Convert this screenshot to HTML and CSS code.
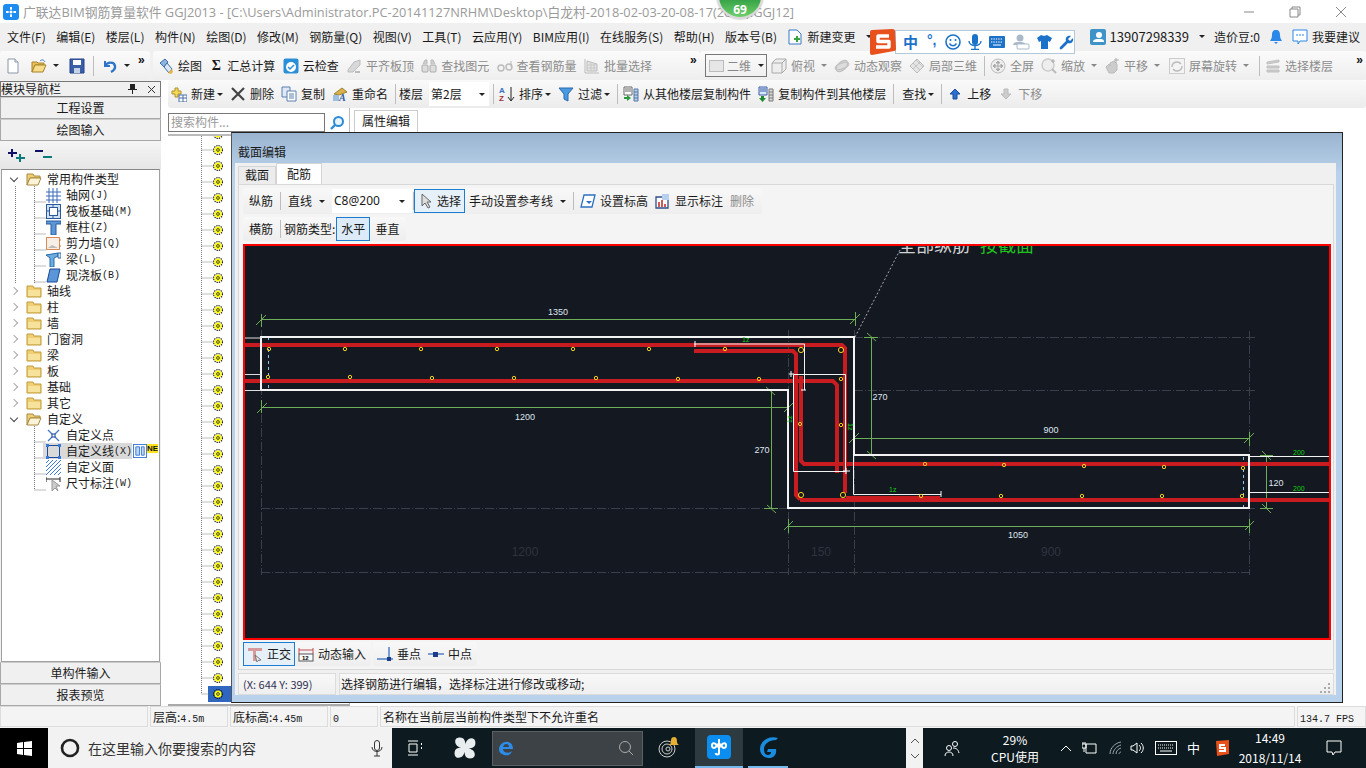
FILE: index.html
```html
<!DOCTYPE html>
<html lang="zh">
<head>
<meta charset="utf-8">
<title>广联达BIM钢筋算量软件</title>
<link rel="stylesheet" href="styles.css">
</head>
<body>
<svg class="defs" width="0" height="0">
  <symbol id="new" viewBox="0 0 16 16"><path d="M3 1h7l3 3v11H3z" fill="#fff" stroke="#8a97a8"/><path d="M10 1v3h3" fill="#dfe6ee" stroke="#8a97a8"/></symbol>
  <symbol id="open" viewBox="0 0 16 16"><path d="M1 14V4h5l1 1h6v2H4z" fill="#e8c05a" stroke="#a8842c"/><path d="M1 14l3-7h11l-3 7z" fill="#f7dc8c" stroke="#a8842c"/><path d="M9 3c2-2 4-1 5 1" fill="none" stroke="#3a78b8"/></symbol>
  <symbol id="save" viewBox="0 0 16 16"><path d="M1 1h14v14H1z" fill="#3a5fa8" stroke="#24408a"/><path d="M4 2h8v5H4z" fill="#fff"/><path d="M5 10h6v5H5z" fill="#c6d2e6"/></symbol>
  <symbol id="undo" viewBox="0 0 16 16"><path d="M3 3v5h5" fill="none" stroke="#2c74c8" stroke-width="2"/><path d="M3 8c2-4 9-5 10 0 .5 3-2 5-4 6" fill="none" stroke="#2c74c8" stroke-width="2.4"/></symbol>
  <symbol id="paint" viewBox="0 0 16 16"><path d="M2 5l5-4 3 3-4 5z" fill="#8fb4de" stroke="#3d6ea8"/><path d="M6 9l3-4 5 6-3 4z" fill="#dbe7f4" stroke="#3d6ea8"/><path d="M10 15l4-4 1 3-2 2z" fill="#e8b33a"/></symbol>
  <symbol id="cloud" viewBox="0 0 16 16"><rect x="0.5" y="0.5" width="15" height="15" rx="2" fill="#2b8fd8"/><circle cx="8" cy="9" r="5" fill="#fff"/><path d="M5 9l2 2 4-4" fill="none" stroke="#2b8fd8" stroke-width="1.5"/></symbol>
  <symbol id="gridgray" viewBox="0 0 16 16"><path d="M2 12l6-8 6-2v5l-7 7H2z" fill="#d8d8d8" stroke="#bbb"/><path d="M9 13h5v2H9z" fill="#bbb"/></symbol>
  <symbol id="bino" viewBox="0 0 16 16"><path d="M2 6l2-4h2v4M14 6l-2-4h-2v4" fill="#ccc" stroke="#bbb"/><rect x="1" y="7" width="6" height="7" rx="1" fill="#ddd" stroke="#aaa"/><rect x="9" y="7" width="6" height="7" rx="1" fill="#ddd" stroke="#aaa"/></symbol>
  <symbol id="glass" viewBox="0 0 16 16"><circle cx="4" cy="10" r="3" fill="none" stroke="#bbb" stroke-width="1.4"/><circle cx="12" cy="9" r="3" fill="none" stroke="#bbb" stroke-width="1.4"/><path d="M14 3v6" stroke="#bbb"/></symbol>
  <symbol id="batch" viewBox="0 0 16 16"><path d="M1 1v14h14" fill="none" stroke="#bbb"/><path d="M3 3l10 3v7H3z" fill="#e4e4e4" stroke="#bbb"/><path d="M3 7h10M3 10h10M7 4v9M10 5v8" stroke="#c8c8c8"/></symbol>
  <symbol id="cube" viewBox="0 0 16 16"><path d="M1 5l4-4h10v10l-4 4H1z" fill="#eee" stroke="#aaa"/><path d="M1 5h10v10M11 5l4-4" fill="none" stroke="#aaa"/></symbol>
  <symbol id="orbit" viewBox="0 0 16 16"><ellipse cx="8" cy="8" rx="4" ry="7" transform="rotate(45 8 8)" fill="#ddd" stroke="#bbb"/><ellipse cx="8" cy="8" rx="7" ry="3" transform="rotate(-20 8 8)" fill="none" stroke="#c4c4c4" stroke-width="1.5"/></symbol>
  <symbol id="local3d" viewBox="0 0 16 16"><path d="M8 1l7 7-7 7-7-7z" fill="#e4e4e4" stroke="#bbb"/><path d="M4 5l7 7M7 2l7 7M4 11l7-7" stroke="#c4c4c4"/></symbol>
  <symbol id="full" viewBox="0 0 16 16"><circle cx="8" cy="8" r="7" fill="#eee" stroke="#bbb"/><path d="M8 3v10M3 8h10M8 3l-2 2h4zM8 13l-2-2h4zM3 8l2-2v4zM13 8l-2-2v4z" fill="#aaa" stroke="#aaa"/></symbol>
  <symbol id="zoomi" viewBox="0 0 16 16"><circle cx="7" cy="7" r="6" fill="#eee" stroke="#ccc" stroke-width="1.5"/><path d="M11 11l4 4" stroke="#bbb" stroke-width="2"/><path d="M12 1v4M10 3h4" stroke="#aaa"/></symbol>
  <symbol id="hand" viewBox="0 0 16 16"><path d="M2 9l3-3 1 2V5l4-2 3 3v6l-3 3H5z" fill="#ccc" stroke="#bbb"/><path d="M12 0v5M10 2h5" stroke="#aaa"/></symbol>
  <symbol id="rot" viewBox="0 0 16 16"><rect x="0.5" y="0.5" width="15" height="15" fill="#f4f4f4" stroke="#ccc"/><path d="M3 9a5 5 0 0 1 9-3M13 8a5 5 0 0 1-9 3" fill="none" stroke="#bbb" stroke-width="1.4"/></symbol>
  <symbol id="layers" viewBox="0 0 16 16"><path d="M2 4l12-2v2L2 6zM2 8h12v2H2zM2 12h12v2H2z" fill="#ccc" stroke="#c0c0c0"/></symbol>
  <symbol id="add" viewBox="0 0 16 16"><path d="M1 5h3V2h3v3h3v3H7v3H4V8H1z" fill="#f4d858" stroke="#b0902a"/><rect x="8" y="9" width="8" height="7" fill="#fff" stroke="#4870a8"/><path d="M8 12h8M12 9v7" stroke="#4870a8"/></symbol>
  <symbol id="del" viewBox="0 0 16 16"><path d="M2 2l12 12M14 2L2 14" stroke="#444" stroke-width="2.2"/></symbol>
  <symbol id="copy" viewBox="0 0 16 16"><path d="M1 1h8v10H1z" fill="#dfe9f6" stroke="#5a80b0"/><path d="M6 5h9v10H6z" fill="#fff" stroke="#5a80b0"/><path d="M8 8h5M8 10h5M8 12h5" stroke="#5a80b0"/></symbol>
  <symbol id="rename" viewBox="0 0 16 16"><path d="M2 8l8-6 5 4-8 3z" fill="#d8b24a" stroke="#a08030"/><path d="M1 15V9h6v6z" fill="#9cc0e0"/><text x="7" y="15" font-size="10" font-family="Liberation Serif" font-weight="700" font-style="italic" fill="#2c5ca8">A</text></symbol>
  <symbol id="sort" viewBox="0 0 16 16"><text x="0" y="7" font-size="8" font-family="Liberation Sans" font-weight="700" fill="#3272c0">A</text><text x="0" y="15" font-size="8" font-family="Liberation Sans" font-weight="700" fill="#a03030">Z</text><path d="M12 1v13M9 11l3 4 3-4" fill="none" stroke="#222"/></symbol>
  <symbol id="funnel" viewBox="0 0 16 16"><path d="M1 2h14l-5 6v7l-4-2V8z" fill="#4a9ae0" stroke="#2868b0"/></symbol>
  <symbol id="copyin" viewBox="0 0 16 16"><path d="M1 1h8v8H1z" fill="#fff" stroke="#666"/><path d="M2 3h6M2 5h6" stroke="#666"/><path d="M11 3h4v12h-4z" fill="#bcd0e8" stroke="#5078a8"/><path d="M11 6h4M11 9h4M11 12h4" stroke="#5078a8"/><path d="M1 11h3V9l4 3-4 3v-2H1z" fill="#2a9a40"/></symbol>
  <symbol id="copyout" viewBox="0 0 16 16"><path d="M1 1h8v8H1z" fill="#d8e6fa" stroke="#3a5ca8"/><path d="M2 3h6M2 5h6" stroke="#3a5ca8"/><path d="M11 3h4v12h-4z" fill="#ddd" stroke="#777"/><path d="M11 6h4M11 9h4M11 12h4" stroke="#777"/><path d="M3 10h3v2h2l-3.500 4L1 12h2z" fill="#1e8a30"/></symbol>
  <symbol id="up" viewBox="0 0 16 16"><path d="M8 3l5 5h-3v5H6V8H3z" fill="#2a70d0" stroke="#1a4c98"/></symbol>
  <symbol id="down" viewBox="0 0 16 16"><path d="M6 3h4v5h3l-5 5-5-5h3z" fill="#ccc" stroke="#bbb"/></symbol>
  <symbol id="cursor" viewBox="0 0 16 16"><path d="M3 1v12l3-3 3 5 2-1-3-5h4z" fill="#ddd" stroke="#666"/></symbol>
  <symbol id="level" viewBox="0 0 16 16"><path d="M4 2h11l-3 12H1z" fill="#fff" stroke="#2c70c0" stroke-width="1.3"/><path d="M6 8h6l-3 3z" fill="#2c70c0"/></symbol>
  <symbol id="mark" viewBox="0 0 16 16"><path d="M1 4h12v11H1z" fill="#fff" stroke="#2c4e88" stroke-width="1.3"/><path d="M7 1h7v6H7z" fill="#b8d0ee"/><path d="M4 9v5M7 7v7M10 11v3" stroke="#c83030" stroke-width="1.6"/></symbol>
  <symbol id="ortho" viewBox="0 0 16 16"><path d="M1 2h14v3H9v10H6V5H1z" fill="#d89a9a"/><path d="M8 9l6 5-3 .5-1 1.500z" fill="#f0f0f0" stroke="#777"/></symbol>
  <symbol id="dyn" viewBox="0 0 16 16"><path d="M1 2v6M15 2v6M1 4h14" fill="none" stroke="#c05050"/><rect x="1" y="8" width="14" height="7" fill="#fff" stroke="#555"/><text x="4" y="14" font-size="6" font-family="Liberation Sans" font-weight="700">12</text></symbol>
  <symbol id="perp" viewBox="0 0 16 16"><path d="M0 13h16" stroke="#4478c0" stroke-width="1.4"/><path d="M12 1v14" stroke="#4478c0" stroke-width="1.4"/><rect x="10" y="11" width="4" height="4" fill="#1a3c8a"/></symbol>
  <symbol id="mid" viewBox="0 0 16 16"><path d="M0 8h16" stroke="#4478c0" stroke-width="1.4"/><rect x="5" y="6" width="5" height="5" fill="#1a3c8a"/></symbol>
  <symbol id="closed" viewBox="0 0 16 14"><path d="M1 13V2h6l1 2h7v9z" fill="#f0cf72" stroke="#c09a3c"/><path d="M2 6h12v6H2z" fill="#f7e29c"/></symbol>
  <symbol id="opened" viewBox="0 0 16 14"><path d="M1 13V2h6l1 2h6v2H4z" fill="#f0cf72" stroke="#a88a40"/><path d="M1 13l3-7h11l-3 7z" fill="#fbf3d8" stroke="#a88a40"/></symbol>
  <symbol id="gear" viewBox="0 0 10 10"><circle cx="5" cy="5" r="4.400" fill="none" stroke="#111" stroke-width="1.2" stroke-dasharray="1.300 1"/><circle cx="5" cy="5" r="3.500" fill="#ff0"/><circle cx="5" cy="5" r="1.400" fill="#ff0" stroke="#333" stroke-width="0.900"/></symbol>
  <symbol id="axis" viewBox="0 0 15 15"><path d="M0 4h15M0 8h15M0 12h15M3 0v15M7 0v15M11 0v15" stroke="#3a6ab8"/></symbol>
  <symbol id="raft" viewBox="0 0 15 15"><rect x="0.5" y="0.5" width="14" height="14" fill="#cfe0f2" stroke="#2a5a9c"/><rect x="3.5" y="3.5" width="8" height="8" fill="#fff" stroke="#2a5a9c"/><path d="M0 7h3M12 7h3M7 0v3M7 12v3" stroke="#2a5a9c"/></symbol>
  <symbol id="col" viewBox="0 0 15 15"><path d="M0 1h15v3H10v11H5V4H0z" fill="#5a96d8" stroke="#2a5a9c"/></symbol>
  <symbol id="wall" viewBox="0 0 15 15"><rect x="0.5" y="1.5" width="13" height="12" fill="#f7eee6" stroke="#d88a5a"/><path d="M2 12l4-3 6 3z" fill="#bbb"/><path d="M13 4h2M13 10h2" stroke="#d8782a"/></symbol>
  <symbol id="beam" viewBox="0 0 15 15"><path d="M0 3l12-2v3L8 6v9H4V6z" fill="#6aaee0" stroke="#2a6aa8"/><path d="M12 1h3v5h-3z" fill="#cfe0f2" stroke="#2a6aa8"/></symbol>
  <symbol id="slab" viewBox="0 0 15 15"><path d="M4 1h10l-3 13H1z" fill="#5a96d8" stroke="#1a4a98"/></symbol>
  <symbol id="point" viewBox="0 0 15 15"><path d="M2 2l11 11M13 2L2 13" stroke="#4478c0" stroke-width="1.3"/><rect x="6" y="6" width="3" height="3" fill="#fff" stroke="#1a4a98"/></symbol>
  <symbol id="line" viewBox="0 0 15 15"><rect x="1.5" y="1.5" width="12" height="12" fill="none" stroke="#1a4a98"/><path d="M0 0h3v3H0zM12 0h3v3h-3zM0 12h3v3H0zM12 12h3v3h-3z" fill="#3a7ad8"/></symbol>
  <symbol id="area" viewBox="0 0 15 15"><path d="M0 3l3-3M0 7l7-7M0 11L11 0M0 15L15 0M4 15L15 4M8 15l7-7M12 15l3-3" stroke="#3a7ad8"/></symbol>
  <symbol id="dim" viewBox="0 0 15 15"><path d="M0 1v5M14 1v5M0 3h14" fill="none" stroke="#222"/><path d="M6 4v11l3-3 3 3-2-5h4z" fill="#ccc" stroke="#999"/></symbol>
  <symbol id="plus2" viewBox="0 0 20 14"><path d="M1 5h9M5 1v8" stroke="#116" stroke-width="2"/><path d="M9 10h9M13 6v8" stroke="#0a7a7a" stroke-width="2"/></symbol>
  <symbol id="minus2" viewBox="0 0 20 14"><path d="M1 3h8" stroke="#116" stroke-width="2"/><path d="M9 9h9" stroke="#0a7a7a" stroke-width="2"/></symbol>
  <symbol id="user" viewBox="0 0 16 16"><rect width="16" height="16" rx="2" fill="#3e94c8"/><circle cx="9" cy="6" r="3" fill="#fff"/><path d="M3 13c0-3 3-3 6-3s5 0 5 3z" fill="#fff"/></symbol>
</svg>

<div class="app">
  <header class="titlebar">
    <svg class="appicon" width="16" height="16" viewBox="0 0 16 16"><rect width="16" height="16" rx="3" fill="#1c8cf0"/><path d="M8 3v10M3 8h10" stroke="#fff" stroke-width="2"/><circle cx="8" cy="8" r="2" fill="none" stroke="#1c8cf0"/></svg>
    <span class="titletext">广联达BIM钢筋算量软件 GGJ2013 - [C:\Users\Administrator.PC-20141127NRHM\Desktop\白龙村-2018-02-03-20-08-17(2666).GGJ12]</span>
    <div class="winctrls">
      <svg width="12" height="12" viewBox="0 0 12 12"><path d="M1 6h10" stroke="#888"/></svg>
      <svg width="12" height="12" viewBox="0 0 12 12"><path d="M3 3V1h8v8H9M1 3h8v8H1z" fill="none" stroke="#888"/></svg>
      <svg width="12" height="12" viewBox="0 0 12 12"><path d="M1 1l10 10M11 1L1 11" stroke="#888"/></svg>
    </div>
  </header>

  <nav class="menubar">
    <span>文件(F)</span><span>编辑(E)</span><span>楼层(L)</span><span>构件(N)</span><span>绘图(D)</span><span>修改(M)</span><span>钢筋量(Q)</span><span>视图(V)</span><span>工具(T)</span><span>云应用(Y)</span><span>BIM应用(I)</span><span>在线服务(S)</span><span>帮助(H)</span><span>版本号(B)</span>
    <span class="menu-change"><svg class="ic" viewBox="0 0 16 16"><path d="M2 1h8l4 4v10H2z" fill="#fff" stroke="#3a78c8"/><path d="M7 9h2V7h2v2h2v2h-2v2H9v-2H7z" fill="#3aa040"/></svg>新建变更<i class="caret"></i></span>
    <div class="menu-right">
      <span class="account"><svg class="ic" viewBox="0 0 16 16"><use href="#user"/></svg><span class="phone">13907298339</span><i class="caret"></i></span>
      <span>造价豆:0</span>
      <svg class="bell" viewBox="0 0 14 16"><path d="M7 1c3 0 4 2 4 5 0 3 1 4 2 6H1c1-2 2-3 2-6 0-3 1-5 4-5zM5 13h4l-2 2z" fill="#2c88e8"/></svg>
      <span class="suggest"><svg class="ic" viewBox="0 0 16 16"><path d="M1 1h14v11H8l-2 3v-3H1z" fill="#fff" stroke="#2c88e8"/><path d="M4 6h2M7 6h2M10 6h2" stroke="#2c88e8"/></svg>我要建议</span>
    </div>
  </nav>

  <div class="toolbar1">
    <div class="tbgroup g1">
      <svg class="ic" viewBox="0 0 16 16"><use href="#new"/></svg>
      <svg class="ic s6" viewBox="0 0 16 16"><use href="#open"/></svg><i class="caret"></i>
      <svg class="ic s2" viewBox="0 0 16 16"><use href="#save"/></svg>
      <i class="sep"></i>
      <svg class="ic" viewBox="0 0 16 16"><use href="#undo"/></svg><i class="caret"></i>
      <span class="more m1">»</span>
    </div>
    <div class="tbgroup g2">
      <span class="tb"><svg class="ic" viewBox="0 0 16 16"><use href="#paint"/></svg>绘图</span>
      <span class="tb sigma"><b>Σ</b>汇总计算</span>
      <span class="tb"><svg class="ic" viewBox="0 0 16 16"><use href="#cloud"/></svg>云检查</span>
      <span class="tb dis"><svg class="ic" viewBox="0 0 16 16"><use href="#gridgray"/></svg>平齐板顶</span>
      <span class="tb dis"><svg class="ic" viewBox="0 0 16 16"><use href="#bino"/></svg>查找图元</span>
      <span class="tb dis"><svg class="ic" viewBox="0 0 16 16"><use href="#glass"/></svg>查看钢筋量</span>
      <span class="tb dis"><svg class="ic" viewBox="0 0 16 16"><use href="#batch"/></svg>批量选择</span>
      <span class="more m2">»</span>
    </div>
    <div class="tbgroup g3">
      <span class="combo2d"><i class="swatch"></i><span>二维</span><i class="caret"></i></span>
      <span class="tb dis"><svg class="ic" viewBox="0 0 16 16"><use href="#cube"/></svg>俯视<i class="caret gray"></i></span>
      <span class="tb dis"><svg class="ic" viewBox="0 0 16 16"><use href="#orbit"/></svg>动态观察</span>
      <span class="tb dis"><svg class="ic" viewBox="0 0 16 16"><use href="#local3d"/></svg>局部三维</span>
      <i class="sep"></i>
      <span class="tb dis"><svg class="ic" viewBox="0 0 16 16"><use href="#full"/></svg>全屏</span>
      <span class="tb dis"><svg class="ic" viewBox="0 0 16 16"><use href="#zoomi"/></svg>缩放<i class="caret gray"></i></span>
      <span class="tb dis"><svg class="ic" viewBox="0 0 16 16"><use href="#hand"/></svg>平移<i class="caret gray"></i></span>
      <span class="tb dis rotbtn"><svg class="ic" viewBox="0 0 16 16"><use href="#rot"/></svg>屏幕旋转<i class="caret gray"></i></span>
      <i class="sep sep2"></i>
      <span class="tb dis"><svg class="ic" viewBox="0 0 16 16"><use href="#layers"/></svg>选择楼层</span>
      <span class="more m3">»</span>
    </div>
  </div>

  <main class="main">
    <aside class="nav">
      <div class="navhead"><span>模块导航栏</span><span class="navctl"><svg width="9" height="10" viewBox="0 0 9 10"><path d="M2 0h5v5h2v1H5v4H4V6H0V5h2z" fill="#222"/></svg><svg width="9" height="9" viewBox="0 0 9 9"><path d="M1 1l7 7M8 1L1 8" stroke="#333"/></svg></span></div>
      <div class="navbtn">工程设置</div>
      <div class="navbtn">绘图输入</div>
      <div class="treetools">
        <svg width="20" height="14" viewBox="0 0 20 14"><use href="#plus2"/></svg>
        <svg width="20" height="14" viewBox="0 0 20 14"><use href="#minus2"/></svg>
      </div>
      <div class="tree">
        <svg class="treelines" width="60" height="330" viewBox="0 0 60 330"><path d="M13.5 16v98M32.5 16v98M32.5 32h11M32.5 48h11M32.5 64h11M32.5 80h11M32.500 96h11M32.5 112h11M32.5 256v64M32.5 272h11M32.5 288h11M32.5 304h11M32.5 320h11" fill="none" stroke="#777" stroke-dasharray="1 1"/></svg>
        <div class="row"><i class="exp open"></i><svg class="fold" viewBox="0 0 16 14"><use href="#opened"/></svg>常用构件类型</div>
        <div class="row child"><svg class="ti" viewBox="0 0 15 15"><use href="#axis"/></svg>轴网<span class="m">(J)</span></div>
        <div class="row child"><svg class="ti" viewBox="0 0 15 15"><use href="#raft"/></svg>筏板基础<span class="m">(M)</span></div>
        <div class="row child"><svg class="ti" viewBox="0 0 15 15"><use href="#col"/></svg>框柱<span class="m">(Z)</span></div>
        <div class="row child"><svg class="ti" viewBox="0 0 15 15"><use href="#wall"/></svg>剪力墙<span class="m">(Q)</span></div>
        <div class="row child"><svg class="ti" viewBox="0 0 15 15"><use href="#beam"/></svg>梁<span class="m">(L)</span></div>
        <div class="row child"><svg class="ti" viewBox="0 0 15 15"><use href="#slab"/></svg>现浇板<span class="m">(B)</span></div>
        <div class="row"><i class="exp"></i><svg class="fold" viewBox="0 0 16 14"><use href="#closed"/></svg>轴线</div>
        <div class="row"><i class="exp"></i><svg class="fold" viewBox="0 0 16 14"><use href="#closed"/></svg>柱</div>
        <div class="row"><i class="exp"></i><svg class="fold" viewBox="0 0 16 14"><use href="#closed"/></svg>墙</div>
        <div class="row"><i class="exp"></i><svg class="fold" viewBox="0 0 16 14"><use href="#closed"/></svg>门窗洞</div>
        <div class="row"><i class="exp"></i><svg class="fold" viewBox="0 0 16 14"><use href="#closed"/></svg>梁</div>
        <div class="row"><i class="exp"></i><svg class="fold" viewBox="0 0 16 14"><use href="#closed"/></svg>板</div>
        <div class="row"><i class="exp"></i><svg class="fold" viewBox="0 0 16 14"><use href="#closed"/></svg>基础</div>
        <div class="row"><i class="exp"></i><svg class="fold" viewBox="0 0 16 14"><use href="#closed"/></svg>其它</div>
        <div class="row"><i class="exp open"></i><svg class="fold" viewBox="0 0 16 14"><use href="#opened"/></svg>自定义</div>
        <div class="row child"><svg class="ti" viewBox="0 0 15 15"><use href="#point"/></svg>自定义点</div>
        <div class="row child selrow"><span class="sel"><svg class="ti" viewBox="0 0 15 15"><use href="#line"/></svg>自定义线<span class="m">(X)</span></span><svg class="tag" viewBox="0 0 15 15"><rect x="0.5" y="0.5" width="14" height="14" fill="#fff" stroke="#3a7ad8"/><path d="M3 3h4v9H3zM9 3h3v9H9z" fill="#bcd6f4" stroke="#3a7ad8"/></svg><span class="ne">NE</span></div>
        <div class="row child"><svg class="ti" viewBox="0 0 15 15"><use href="#area"/></svg>自定义面</div>
        <div class="row child"><svg class="ti" viewBox="0 0 15 15"><use href="#dim"/></svg>尺寸标注<span class="m">(W)</span></div>
      </div>
      <div class="navbtn">单构件输入</div>
      <div class="navbtn">报表预览</div>
    </aside>

    <div class="work">
      <div class="toolbar2">
        <span class="tb"><svg class="ic" viewBox="0 0 16 16"><use href="#add"/></svg>新建<i class="caret"></i></span>
        <span class="tb"><svg class="ic" viewBox="0 0 16 16"><use href="#del"/></svg>删除</span>
        <span class="tb"><svg class="ic" viewBox="0 0 16 16"><use href="#copy"/></svg>复制</span>
        <span class="tb"><svg class="ic" viewBox="0 0 16 16"><use href="#rename"/></svg>重命名</span>
        <i class="sep"></i>
        <span class="floor">楼层</span>
        <span class="floorcombo">第2层<i class="caret"></i></span>
        <i class="sep"></i>
        <span class="tb"><svg class="ic" viewBox="0 0 16 16"><use href="#sort"/></svg>排序<i class="caret"></i></span>
        <span class="tb"><svg class="ic" viewBox="0 0 16 16"><use href="#funnel"/></svg>过滤<i class="caret"></i></span>
        <i class="sep"></i>
        <span class="tb"><svg class="ic" viewBox="0 0 16 16"><use href="#copyin"/></svg>从其他楼层复制构件</span>
        <span class="tb"><svg class="ic" viewBox="0 0 16 16"><use href="#copyout"/></svg>复制构件到其他楼层</span>
        <i class="sep sepf"></i>
        <span class="tb">查找<i class="caret"></i></span>
        <i class="sep"></i>
        <span class="tb"><svg class="ic" viewBox="0 0 16 16"><use href="#up"/></svg>上移</span>
        <span class="tb dis"><svg class="ic" viewBox="0 0 16 16"><use href="#down"/></svg>下移</span>
      </div>
      <div class="workbody">
        <div class="side">
          <div class="search"><span class="searchbox">搜索构件...</span>
            <svg class="mag" width="16" height="16" viewBox="0 0 16 16"><circle cx="9.500" cy="6.500" r="4.500" fill="#e8f4fc" stroke="#2c8ad8" stroke-width="2"/><path d="M6 10l-4 4" stroke="#2c8ad8" stroke-width="2.400"/></svg>
          </div>
          <div class="gears">
            <svg width="63" height="571" viewBox="0 0 63 571">
              <defs><pattern id="gearrow" width="63" height="16" patternUnits="userSpaceOnUse" y="6"><path d="M33.500 8h12" stroke="#777" stroke-dasharray="1 1"/><path d="M33.500 0v16" stroke="#777" stroke-dasharray="1 1"/><use href="#gear" x="45" y="3" width="10" height="10"/></pattern></defs>
              <rect width="63" height="550" fill="url(#gearrow)"/>
              <rect x="40" y="550" width="23" height="16" fill="#2f66c0"/>
              <path d="M33.500 550v8h7" fill="none" stroke="#777" stroke-dasharray="1 1"/>
              <use href="#gear" x="45" y="553" width="10" height="10"/>
            </svg>
          </div>
        </div>
        <div class="props">
          <div class="proptab">属性编辑</div>
        </div>
      </div>
    </div>
  </main>

  <footer class="statusbar">
    <span class="cell c1"></span><span class="cell c2">层高:<span class="m">4.5m</span></span><span class="cell c3">底标高:<span class="m">4.45m</span></span><span class="cell c4"><span class="m">0</span></span><span class="cell c5">名称在当前层当前构件类型下不允许重名</span><span class="cell c6"><span class="m">134.7 FPS</span></span>
  </footer>

  <div class="taskbar">
    <div class="start"><svg width="15" height="15" viewBox="0 0 15 15"><path d="M0 2l6-1v6H0zM7 1l8-1v7H7zM0 8h6v6l-6-1zM7 8h8v7l-8-1z" fill="#fff"/></svg></div>
    <div class="tsearch">
      <svg width="20" height="20" viewBox="0 0 20 20"><circle cx="10" cy="10" r="8" fill="none" stroke="#222" stroke-width="2.600"/></svg>
      <span>在这里输入你要搜索的内容</span>
      <svg class="tmic" width="12" height="17" viewBox="0 0 12 17"><rect x="3.500" y="0.500" width="5" height="10" rx="2.500" fill="none" stroke="#333"/><path d="M1 7c0 6 10 6 10 0M6 12v4M3 16h6" fill="none" stroke="#333"/></svg>
    </div>
    <svg class="tview" width="16" height="16" viewBox="0 0 16 16"><path d="M1 1h10M1 15h10M2 4h8v8H2z" fill="none" stroke="#fff"/><path d="M14 3h1v2h-1zM14 7h1v2h-1z" fill="#fff"/></svg>
    <svg class="tfan" width="24" height="24" viewBox="0 0 22 22"><path d="M11 11C6 11 2 9 2 5s5-4 7-3 3 5 2 9zM11 11c0-5 2-9 6-9s4 5 3 7-5 3-9 2zM11 11c5 0 9 2 9 6s-5 4-7 3-3-5-2-9zM11 11c0 5-2 9-6 9s-4-5-3-7 5-3 9-2z" fill="#e8eef0"/></svg>
    <div class="tbox">
      <svg width="18" height="18" viewBox="0 0 18 18"><path d="M2 11c0-6 5-9 9-8 4 1 5 4 5 7H6c0 4 6 5 9 2-1 4-5 5-8 4-3-1-5-3-5-5zM6 8h6c0-4-5-4-6 0z" fill="#2c8ce8"/></svg>
      <svg width="16" height="16" viewBox="0 0 16 16"><circle cx="7" cy="7" r="5.500" fill="none" stroke="#aaa"/><path d="M11 11l4 4" stroke="#aaa"/></svg>
    </div>
    <div class="tapp t1"><svg width="24" height="24" viewBox="0 0 24 24"><circle cx="10" cy="13" r="8" fill="none" stroke="#ccc"/><circle cx="10" cy="13" r="5" fill="none" stroke="#ccc"/><circle cx="11" cy="13" r="2" fill="none" stroke="#ccc"/><path d="M17 1c3 0 3 3 3 5s2 3 2 3h-10s2-1 2-3 0-5 3-5z" fill="#e8b030"/></svg></div>
    <div class="tapp t2"><svg width="24" height="24" viewBox="0 0 24 24"><rect width="24" height="24" rx="4" fill="#0c8ef0"/><path d="M12 4v14c0 2-3 2-3.500 0M5 10.500c0-3 3-2.500 4-1h6c1-1.500 4-2 4 1s-3 3-4 1H9c-1 2-4 2-4-1z" fill="none" stroke="#fff" stroke-width="2"/></svg></div>
    <div class="tapp t3"><svg width="24" height="24" viewBox="0 0 24 24"><path d="M22 3C14 0 4 5 4 14c0 6 5 9 9 9 5 0 8-4 7-9h-8l-1 3h4c0 2-1 3-3 3-3 0-4-3-4-6 0-5 5-9 12-9z" fill="#1a8ce0"/></svg></div>
    <div class="tstrip"><svg width="10" height="6" viewBox="0 0 10 6"><path d="M1 5l4-4 4 4" fill="none" stroke="#555"/></svg><svg width="10" height="6" viewBox="0 0 10 6"><path d="M1 1l4 4 4-4" fill="none" stroke="#555"/></svg></div>
    <svg class="tperson" width="16" height="17" viewBox="0 0 16 17"><circle cx="5" cy="8" r="2.500" fill="none" stroke="#fff"/><circle cx="11" cy="4" r="2.500" fill="none" stroke="#fff"/><path d="M1 16c0-3 2-4 4-4s4 1 4 4M9 8c3 0 5 1 6 5" fill="none" stroke="#fff"/></svg>
    <div class="tcpu"><span>29%</span><span>CPU使用</span></div>
    <svg class="tray1" width="12" height="7" viewBox="0 0 12 7"><path d="M1 6l5-5 5 5" fill="none" stroke="#fff"/></svg>
    <svg class="tray2" width="16" height="14" viewBox="0 0 16 14"><path d="M4 3h10v9H4zM1 3V1M3 3V1M0 3h4v4H0zM2 7v4" fill="none" stroke="#fff"/></svg>
    <svg class="tray3" width="14" height="14" viewBox="0 0 14 14"><path d="M1 13c0-6 5-11 11-12M4 13c0-4 4-8 8-9M7 13c0-3 2-5 5-6M10 13c0-1 1-2 2-2" fill="none" stroke="#9aa"/></svg>
    <svg class="tray4" width="14" height="14" viewBox="0 0 14 14"><path d="M1 5h2l4-3v10L3 9H1zM9 4c2 2 2 4 0 6M11 2c3 3 3 7 0 10" fill="none" stroke="#fff"/></svg>
    <svg class="tray5" width="22" height="14" viewBox="0 0 22 14"><rect x="0.500" y="0.500" width="21" height="13" fill="none" stroke="#fff"/><path d="M3 4h16M3 7h16" stroke="#fff" stroke-dasharray="1 1"/><path d="M5 10h12" stroke="#fff"/></svg>
    <span class="trayzh">中</span>
    <svg class="tray6" width="16" height="16" viewBox="0 0 16 16"><path d="M2 1l13-1v14L3 16z" fill="#e8501c"/><path d="M11 5H6v3h5v3H5" fill="none" stroke="#fff" stroke-width="2"/></svg>
    <div class="tclock"><span>14:49</span><span>2018/11/14</span></div>
    <svg class="tnote" width="16" height="16" viewBox="0 0 16 16"><path d="M1 1h14v11H9l-2 3-1-3H1z" fill="none" stroke="#fff"/></svg>
  </div>
</div>

<div class="badge"><span>69</span></div>

<div class="ime">
  <svg class="imelogo" width="30" height="26" viewBox="0 0 30 26"><path d="M4 3Q4 1 6 1l20-1q3 0 3 2l1 18q0 2-2 2L6 26q-2 0-2-2z" fill="#e8501c"/><path d="M23 7H12v5.500h11V18H10" fill="none" stroke="#fff" stroke-width="3.400" stroke-linejoin="round"/></svg>
  <div class="imebar">
    <b class="imezh">中</b>
    <span class="imedot">°,</span>
    <svg width="16" height="16" viewBox="0 0 16 16"><circle cx="8" cy="8" r="7" fill="#fff" stroke="#1c72c8" stroke-width="1.600"/><circle cx="5.500" cy="6" r="1" fill="#1c72c8"/><circle cx="10.500" cy="6" r="1" fill="#1c72c8"/><path d="M4.500 9.500c2 3 5 3 7 0" fill="none" stroke="#1c72c8" stroke-width="1.400"/></svg>
    <svg width="14" height="16" viewBox="0 0 14 16"><rect x="4" y="0" width="6" height="11" rx="3" fill="#1c72c8"/><path d="M1 7c0 6 12 6 12 0M7 12v3M3 15.500h8" fill="none" stroke="#1c72c8" stroke-width="1.400"/></svg>
    <svg width="16" height="12" viewBox="0 0 16 12"><rect width="16" height="12" rx="1" fill="#1c72c8"/><path d="M2 3h12M2 6h12" stroke="#fff" stroke-dasharray="1.400 1"/><path d="M4 9h8" stroke="#fff"/></svg>
    <svg width="18" height="16" viewBox="0 0 18 16"><circle cx="8" cy="4" r="3.500" fill="#a9b9c9"/><path d="M1 12c0-4 3-4 7-4s5 1 6 3H1z" fill="#a9b9c9"/><rect x="5" y="10" width="12" height="5" rx="1" fill="#fff" stroke="#a9b9c9"/></svg>
    <svg width="15" height="14" viewBox="0 0 15 14"><path d="M4 0l3 1 3-1 5 3-2 4-2-1v8H4V6L2 7 0 3z" fill="#1c72c8"/></svg>
    <svg width="15" height="15" viewBox="0 0 15 15"><path d="M1 14c-1-1 0-2 1-3l5-5C6 3 8 0 12 1L9 4l2 2 3-3c1 4-2 6-5 5l-5 5c-1 1-2 2-3 1z" fill="#1c72c8"/></svg>
  </div>
</div>

<section class="dialog">
  <div class="dlgtitle">截面编辑</div>
  <div class="dlgbody">
    <div class="tabs"><span class="tab">截面</span><span class="tab on">配筋</span></div>
    <div class="dlgcontent">
      <div class="dtb w1">
        <span class="dlabel">纵筋</span><i class="sep"></i>
        <span class="dtext">直线<i class="caret"></i></span>
        <span class="rebarcombo">C8@200<i class="caret"></i></span>
        <i class="sep"></i>
        <span class="toggle sel1"><svg class="ic" viewBox="0 0 16 16"><use href="#cursor"/></svg>选择</span>
        <span class="dtext ref">手动设置参考线<i class="caret"></i></span>
        <i class="sep sepl"></i>
        <span class="tb"><svg class="ic" viewBox="0 0 16 16"><use href="#level"/></svg>设置标高</span>
        <span class="tb"><svg class="ic" viewBox="0 0 16 16"><use href="#mark"/></svg>显示标注</span>
        <span class="tb dis">删除</span>
      </div>
      <div class="dtb w2">
        <span class="dlabel">横筋</span><i class="sep"></i>
        <span class="typelbl">钢筋类型:</span>
        <span class="toggle water">水平</span>
        <span class="vert">垂直</span>
      </div>
      <div class="canvas">
        <svg width="1084" height="392" viewBox="245 246 1084 392">
          <g stroke="#39404c" fill="none" stroke-dasharray="9 2 1 2">
            <path d="M854 337.500H1255M854 390.500H1255M261 508.500H788M1250 508.500H1255M261 572.500H1250M261.500 330V575M788.500 330V575M854.500 330V575M1249.500 331V575"/>
          </g>
          <path d="M900 250L855 337" stroke="#aaa" stroke-dasharray="2 2" fill="none"/>
          <text class="big" x="898" y="252" fill="#d0d0d0">全部纵筋</text>
          <text class="big" x="980" y="252" fill="#20c020">按截面</text>
          <g class="faint"><text x="525" y="556">1200</text><text x="821" y="556">150</text><text x="1051" y="556">900</text></g>

          <g stroke="#6fae58" fill="none">
            <path d="M261 319.500H855M261.500 314v13M256 325l10-10M855.500 312v14M850 324l10-10"/>
            <path d="M261 407.500H788M261.500 400v13M257 413l10-10M788.500 402v13M784 412l10-10"/>
            <path d="M854 438.500H1249M854.500 430v14M849 443l10-10M1249.500 432v14M1244 443l10-10"/>
            <path d="M788 526.500H1249M788.500 519v14M784 530l9-9M1249.500 519v14M1245 530l9-9"/>
            <path d="M771.500 390V508M764 390.500h14M766 387l9 8M764 508.500h14M767 505l9 8"/>
            <path d="M871.500 337V455M864 337.500h14M867 333l9 8M864 455.500h14M867 451l9 8"/>
            <path d="M1266.500 455V508M1260 455.500h13M1262 451l9 9M1260 508.500h13M1262 504l9 9"/>
          </g>
          <g class="dimtxt">
            <text x="558" y="315">1350</text><text x="525" y="420">1200</text><text x="762" y="453">270</text><text x="880" y="400">270</text><text x="1051" y="433">900</text><text x="1018" y="538">1050</text><text x="1276" y="486">120</text>
          </g>

          <path d="M268.500 337V390M1243.500 457V508" stroke="#8fc4f0" stroke-dasharray="3 3"/>

          <g stroke="#c81c20" stroke-width="4" fill="none">
            <path d="M245 345H842L845 348V493"/>
            <path d="M694 351H793L796 354V495L800 499.500"/>
            <path d="M245 381H833L837 385V473"/>
            <path d="M801 376V461L804 464H1329"/>
            <path d="M800 500H1329"/>
            <path d="M846 498H940"/>
          </g>

          <g stroke="#f2f2f2" fill="none">
            <path stroke-width="2" d="M261 390V337H854V455H1249V508H788V390H261M1249 455V508"/>
            <path d="M245 338H261M245 374.500H261M245 390.500H261" stroke="#ddd"/>
            <path d="M1250 456.500H1329M1250 492.500H1329"/>
            <path d="M694 344H804.500V390M793.500 374.500H845.500V471.500H793.500V374.500M853.500 456V494.500H941"/>
          </g>
          <g stroke="#fff" fill="none"><path d="M789 374h5M791 371v6M801 390h5M843 471h7M846 468v6M941 491v6M695 341v6"/></g>

          <g fill="none" stroke="#f4d020">
            <circle cx="269" cy="349" r="1.700"/><circle cx="345" cy="349" r="1.700"/><circle cx="421" cy="349" r="1.700"/><circle cx="497" cy="349" r="1.700"/><circle cx="573" cy="349" r="1.700"/><circle cx="649" cy="349" r="1.700"/><circle cx="725" cy="349" r="1.700"/>
            <circle cx="268" cy="377" r="1.700"/><circle cx="350" cy="377" r="1.700"/><circle cx="432" cy="378" r="1.700"/><circle cx="514" cy="378" r="1.700"/><circle cx="596" cy="378" r="1.700"/><circle cx="678" cy="379" r="1.700"/><circle cx="759" cy="379" r="1.700"/>
            <circle cx="801" cy="350" r="2.600"/><circle cx="841" cy="350" r="2.600"/><circle cx="841" cy="379" r="1.700"/><circle cx="800" cy="424" r="1.700"/><circle cx="841" cy="425" r="1.700"/><circle cx="801" cy="495" r="2.600"/><circle cx="843" cy="495" r="2.600"/>
            <circle cx="925" cy="464" r="1.700"/><circle cx="1004" cy="465" r="1.700"/><circle cx="1084" cy="466" r="1.700"/><circle cx="1164" cy="467" r="1.700"/><circle cx="1243" cy="468" r="1.700"/>
            <circle cx="921" cy="496" r="1.700"/><circle cx="1001" cy="496" r="1.700"/><circle cx="1082" cy="496" r="1.700"/><circle cx="1162" cy="496" r="1.700"/><circle cx="1242" cy="496" r="1.700"/>
          </g>

          <g class="lbl">
            <text x="742" y="342">1z</text><text x="889" y="492">1z</text><text x="1293" y="455">200</text><text x="1293" y="491">200</text>
            <text x="0" y="0" transform="translate(848 423) rotate(90)">1z</text><text x="0" y="0" transform="translate(792 423) rotate(-90)">1z</text>
          </g>
        </svg>
      </div>
      <div class="dbottom">
        <div class="dtb b1">
          <span class="toggle ortho"><svg class="ic" viewBox="0 0 16 16"><use href="#ortho"/></svg>正交</span>
          <span class="tb"><svg class="ic" viewBox="0 0 16 16"><use href="#dyn"/></svg>动态输入</span>
        </div>
        <div class="dtb b2">
          <span class="tb"><svg class="ic" viewBox="0 0 16 16"><use href="#perp"/></svg>垂点</span>
          <span class="tb"><svg class="ic" viewBox="0 0 16 16"><use href="#mid"/></svg>中点</span>
        </div>
      </div>
    </div>
    <div class="dstatus">
      <span class="dcell coords">(X: 644 Y: 399)</span>
      <span class="dcell msg">选择钢筋进行编辑，选择标注进行修改或移动;</span>
      <svg class="grip" width="10" height="10" viewBox="0 0 10 10"><path d="M8 0h2v2H8zM4 4h2v2H4zM8 4h2v2H8zM0 8h2v2H0zM4 8h2v2H4zM8 8h2v2H8z" fill="#aaa"/></svg>
    </div>
  </div>
</section>
</body>
</html>
```

FILE: styles.css
```css
* { box-sizing: border-box; }
html, body { margin: 0; padding: 0; }
body {
  width: 1366px; height: 768px; overflow: hidden; position: relative;
  background: #fff; color: #1a1a1a;
  font: 12px/16px "Noto Sans CJK SC", "Noto Sans", sans-serif;
}
.defs { position: absolute; }
.app { display: flex; flex-direction: column; width: 1366px; height: 768px; }
i { display: block; font-style: normal; }
svg { display: block; flex: none; }

.ic { width: 16px; height: 16px; }
.caret { width: 0; height: 0; border: 3px solid transparent; border-top: 3px solid #222; border-bottom: 0; flex: none; }
.caret.gray { border-top-color: #888; }
.sep { width: 1px; height: 20px; background: #bdbdbd; flex: none; }
.tb { display: flex; align-items: center; gap: 4px; white-space: nowrap; }
.tb .caret { margin-left: 2px; }
.dis { color: #8c8c8c; }
.m { font-family: "Liberation Mono", monospace; font-size: 10px; }
.row .m { padding-top: 2px; }

/* title */
.titlebar { height: 23px; display: flex; align-items: center; padding-left: 3px; background: #fff; flex: none; }
.appicon { margin-right: 4px; }
.titletext { color: #9a9a9a; font-family: "Open Sans", "Noto Sans CJK SC", sans-serif; font-size: 12.8px; white-space: nowrap; }
.winctrls { margin-left: auto; display: flex; gap: 34px; padding-right: 19px; }

/* menu */
.menubar { height: 27px; background: #f0f0f0; display: flex; align-items: center; padding-left: 7px; gap: 10.45px; flex: none; white-space: nowrap; }
.menu-change { display: flex; align-items: center; gap: 4px; }
.menu-change .caret { margin-left: 6px; }
.menu-right { margin-left: auto; display: flex; align-items: center; gap: 9px; padding-right: 6px; }
.account { display: flex; align-items: center; gap: 4px; }
.phone { font-size: 13px; }
.account .caret { margin-left: 6px; }
.bell { width: 14px; height: 16px; }
.suggest { display: flex; align-items: center; gap: 4px; }

/* toolbar 1 */
.toolbar1 { height: 30px; background: #f0f0f0; display: flex; flex: none; padding-top: 1px; }
.tbgroup { display: flex; align-items: center; background: linear-gradient(#fbfbfb, #eeeeee); border-radius: 3px; position: relative; }
.g1 { width: 150px; padding-left: 5px; gap: 8px; }
.g1 .s6 { margin-left: 2px; }
.g1 .caret { margin-left: -2px; }
.g1 .s2 { margin-left: 2px; }
.g2 { width: 547px; padding-left: 5px; gap: 7.3px; margin-left: 3px; }
.g3 { flex: 1; padding-left: 5px; gap: 7px; margin-left: 0; }
.sigma b { width: 10px; text-align: center; font: 700 14px "Liberation Serif", serif; margin-left: 2px; margin-right: 2px; }
.more { position: absolute; top: 3px; font: 700 12px/12px "Liberation Sans", sans-serif; color: #111; }
.m1 { left: 138px; }
.m2 { left: 537px; }
.m3 { right: 3px; }
.combo2d { width: 62px; height: 23px; border: 1px solid #777; display: flex; align-items: center; padding: 0 3px; gap: 3px; color: #888; margin-right: -3px; flex: none; white-space: nowrap; }
.combo2d .caret { margin-left: 4px; }
.swatch { width: 15px; height: 12px; background: #e6e6e6; border: 1px solid #bbb; flex: none; }
.g3 > .sep { margin: 0 -2px 0 0; }
.g3 > .sep2 { margin-left: 3px; }
.rotbtn { margin-left: 2px; }

/* main */
.main { flex: 1; display: flex; min-height: 0; background: #fff; }
.nav { width: 161px; display: flex; flex-direction: column; flex: none; background: #f0f0f0; }
.navhead { height: 16px; margin-top: 1px; border: 1px solid #777; display: flex; justify-content: space-between; align-items: center; line-height: 14px; font-size: 12px; }
.navctl { display: flex; gap: 10px; padding-right: 4px; align-items: center; }
.navbtn { height: 22px; border: 1px solid #a8a8a8; border-top-color: #ccc; background: #f0f0f0; text-align: center; line-height: 20px; flex: none; }
.treetools { height: 28px; display: flex; align-items: center; gap: 7px; padding-left: 7px; background: linear-gradient(#f4f4f4, #e6e6e6); flex: none; }
.tree { flex: 1; min-height: 0; background: #fff; border: 1px solid #a0a0a0; border-top-color: #888; margin: 0 1px; padding-top: 1px; position: relative; }
.treelines { position: absolute; left: 0; top: 0; }
.row { height: 16px; display: flex; align-items: center; position: relative; white-space: nowrap; padding-left: 8px; }
.row.child { padding-left: 44px; }
.row.selrow { padding-left: 41px; }
.exp { width: 6px; height: 6px; border-top: 1.5px solid #aaa; border-right: 1.5px solid #aaa; transform: rotate(45deg); margin: 0 9px 0 1px; flex: none; }
.exp.open { border-color: #444; transform: rotate(135deg); margin-top: -3px; }
.fold { width: 16px; height: 14px; margin-right: 5px; }
.ti { width: 15px; height: 15px; margin-right: 5px; }
.sel { display: flex; align-items: center; background: #d9d9d9; height: 16px; width: 89px; padding-left: 3px; flex: none; }
.tag { width: 14px; height: 14px; margin-left: 1px; }
.ne { background: #ffe21c; color: #111; font: 700 8px/9px "Liberation Sans", sans-serif; width: 11px; overflow: hidden; margin-top: -5px; }

.work { flex: 1; min-width: 0; margin-left: 7px; display: flex; flex-direction: column; }
.toolbar2 { height: 28px; display: flex; align-items: center; gap: 7px; padding-left: 3px; background: linear-gradient(#fafafa, #ececec); border-radius: 3px; flex: none; white-space: nowrap; }
.toolbar2 .caret { margin-left: -2px; }
.toolbar2 .sep { margin-right: -2px; }
.toolbar2 .sepf { margin-right: 1px; }
.floor { margin-left: -2px; }
.floorcombo { width: 60px; height: 24px; background: #fff; display: flex; align-items: center; justify-content: space-between; padding: 0 4px 0 2px; margin: 0 -3px 0 -1px; }
.workbody { flex: 1; min-height: 0; display: flex; }
.side { width: 182px; display: flex; flex-direction: column; border-bottom: 2px solid #aaa; border-right: 1px solid #bbb; flex: none; }
.search { height: 26px; display: flex; align-items: center; gap: 4px; flex: none; padding-top: 3px; }
.searchbox { width: 157px; height: 19px; border: 1px solid #777; color: #999; padding-left: 2px; line-height: 16px; font-size: 12px; }
.gears { flex: 1; min-height: 0; overflow: hidden; border-top: 2px solid #bbb; }
.props { flex: 1; padding: 2px 0 0 4px; display: flex; }
.proptab { align-self: flex-start; width: 64px; height: 22px; border: 1px solid #ccc; border-bottom: 0; text-align: center; line-height: 20px; background: #fff; }

/* status */
.statusbar { height: 22px; display: flex; gap: 2px; padding: 0 0 1px; background: #f4f4f4; flex: none; }
.cell { border: 1px solid #dcdcdc; height: 21px; padding-left: 2px; line-height: 20px; white-space: nowrap; }
.c1 { width: 148px; } .c2 { width: 78px; } .c3 { width: 98px; } .c4 { width: 48px; } .c5 { width: 915px; } .c6 { flex: 1; }

/* taskbar */
.taskbar { height: 40px; background: #0d1a1f; display: flex; align-items: center; color: #fff; flex: none; position: relative; }
.start { width: 48px; height: 40px; background: #000; display: flex; align-items: center; justify-content: center; flex: none; }
.tsearch { width: 344px; height: 40px; background: #f2f2f2; color: #333; font-size: 14px; display: flex; align-items: center; padding-left: 12px; gap: 8px; flex: none; }
.tmic { margin-left: 107px; }
.tview { margin-left: 15px; }
.tfan { margin-left: 30px; }
.tbox { width: 151px; height: 35px; margin-left: 15px; background: #3c4246; border: 1px solid #5a6064; display: flex; align-items: center; justify-content: space-between; padding: 0 8px 0 4px; }
.tapp { height: 40px; display: flex; align-items: center; justify-content: center; position: relative; flex: none; }
.t1 { width: 52px; }
.t2 { width: 48px; background: #2d3a40; border-bottom: 2px solid #76b9ed; }
.t3 { width: 40px; margin-left: 5px; border-bottom: 2px solid #76b9ed; }
.tstrip { width: 17px; height: 40px; background: #f2f2f2; margin-left: 118px; display: flex; flex-direction: column; justify-content: space-around; align-items: center; padding: 5px 0; flex: none; }
.tperson { margin-left: 21px; }
.tcpu { width: 60px; margin-left: 25px; display: flex; flex-direction: column; align-items: center; line-height: 17px; font-size: 12px; white-space: nowrap; }
.tray1 { margin-left: 15px; }
.tray2 { margin-left: 10px; }
.tray3 { margin-left: 11px; }
.tray4 { margin-left: 7px; }
.tray5 { margin-left: 11px; }
.trayzh { margin-left: 10px; font-size: 13px; }
.tray6 { margin-left: 14px; }
.tclock { width: 64px; margin-left: 8px; display: flex; flex-direction: column; align-items: center; line-height: 20px; font-size: 12px; white-space: nowrap; }
.tnote { margin-left: 24px; }

/* overlays */
.badge { position: absolute; left: 717px; top: -27px; width: 46px; height: 46px; border-radius: 50%; border: 2px solid #d8d8d8; background: linear-gradient(#2a9a40 50%, #6fd06a); color: #fff; text-align: center; box-shadow: 0 0 2px #888; }
.badge span { position: absolute; left: 0; right: 0; top: 28px; font: 700 12px/14px "Noto Sans", sans-serif; }
.ime { position: absolute; left: 866px; top: 29px; display: flex; align-items: center; }
.imelogo { position: relative; z-index: 1; margin-right: -1px; }
.imebar { width: 180px; height: 24px; background: #fff; border: 1px solid #b5c8da; display: flex; align-items: center; gap: 7px; padding-left: 7px; }
.imezh { color: #1c72c8; font-size: 15px; font-weight: 700; width: 15px; }
.imedot { color: #1c72c8; font: 700 14px/14px "Liberation Sans", sans-serif; width: 22px; margin-left: 2px; padding-bottom: 4px; }

.dialog { position: absolute; left: 231px; top: 132px; width: 1112px; height: 571px; border: 1px solid #222; border-left-color: #555; background: linear-gradient(#9ab4d0, #b9d1ea 40px, #b9d1ea); padding: 0 6px 7px 3px; display: flex; flex-direction: column; }
.dlgtitle { height: 30px; line-height: 38px; padding-left: 3px; font-size: 12px; flex: none; }
.dlgbody { flex: 1; min-height: 0; background: #f0f0f0; display: flex; flex-direction: column; padding: 0 2px 1px 3px; }
.tabs { height: 21px; display: flex; align-items: flex-end; flex: none; }
.tab { width: 38px; height: 18px; text-align: center; line-height: 16px; border: 1px solid #d4d4d4; border-bottom: 0; background: #ececec; }
.tab.on { width: 46px; height: 21px; background: #fff; line-height: 20px; }
.dlgcontent { flex: none; height: 486px; border: 1px solid #d8d8d8; padding: 3px 3px 0 4px; display: flex; flex-direction: column; gap: 3px; background: #f4f4f4; }
.dtb { display: flex; align-items: center; gap: 7px; background: linear-gradient(#f8f8f8, #eeeeee); border-radius: 3px; padding-left: 6px; white-space: nowrap; flex: none; }
.w1 { width: 519px; height: 26px; }
.w2 { width: 163px; height: 24px; }
.dtb .sep { height: 18px; }
.dtext { display: flex; align-items: center; gap: 7px; }
.rebarcombo { width: 80px; height: 24px; background: #fff; display: flex; align-items: center; justify-content: space-between; padding: 0 7px 0 2px; font-family: "Noto Sans", sans-serif; font-size: 12px; margin-right: -6px; }
.toggle { display: flex; align-items: center; gap: 2px; height: 24px; border: 1px solid #1c7cd0; background: #e6f0f8; padding: 0 3px 0 4px; }
.sel1 { margin-left: -7px; }
.water { height: 24px; padding: 0 4px; margin-left: -6px; background: #dcebf7; }
.typelbl { margin-left: -4px; }
.vert { margin-left: -2px; }
.ref { margin-left: -3px; }
.sepl { margin-right: -1px; }
.canvas { width: 1088px; height: 396px; border: 2px solid #f00; background: #141821; flex: none; overflow: hidden; }
.big { font: 18px "Noto Sans CJK SC", sans-serif; }
.faint text { font: 12px "Liberation Sans", sans-serif; fill: #2f343e; text-anchor: middle; }
.dimtxt text { font: 9px "Liberation Sans", sans-serif; fill: #dfe6f0; text-anchor: middle; }
.lbl text { font: 7px "Liberation Sans", sans-serif; fill: #10d010; }
.dbottom { display: flex; gap: 2px; flex: none; margin-top: -1px; }
.b1 { width: 128px; height: 24px; padding-left: 0; gap: 3px; }
.b1 .toggle { height: 24px; padding-left: 3px; gap: 4px; }
.b2 { width: 104px; height: 24px; gap: 7px; padding-left: 4px; }
.dstatus { height: 22px; margin-top: 3px; display: flex; gap: 3px; flex: none; position: relative; }
.dcell { border: 1px solid #dcdcdc; background: linear-gradient(#f8f8f8, #efefef); height: 22px; line-height: 20px; padding-left: 4px; white-space: nowrap; }
.coords { width: 98px; font-size: 11px; color: #335; }
.msg { flex: 1; padding-left: 1px; }
.grip { position: absolute; right: 4px; bottom: 2px; }
```
